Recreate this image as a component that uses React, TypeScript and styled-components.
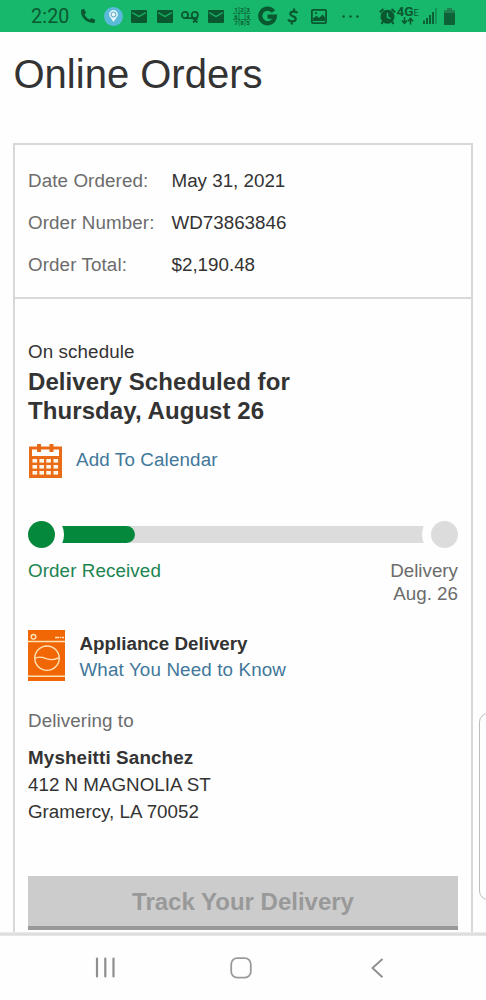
import React from 'react';
import styled, { createGlobalStyle } from 'styled-components';

const INK = '#0a5830';

const GlobalStyle = createGlobalStyle`
  * { box-sizing: border-box; }
  body { margin: 0; background: #fefefe; }
`;

const Screen = styled.div`
  position: relative;
  display: flex;
  flex-direction: column;
  width: 486px;
  height: 1000px;
  overflow: hidden;
  background: #fefefe;
  color: #333;
  font-family: 'Liberation Sans', Arial, sans-serif;
  font-size: 18.8px;
`;

const StatusBar = styled.header`
  display: flex;
  align-items: center;
  flex: none;
  height: 32px;
  padding-left: 31px;
  background: #17b86b;
  color: ${INK};
`;

const Clock = styled.span`
  width: 44px;
  padding-top: 2px;
  font: 400 19.6px/32px Roboto, sans-serif;
  letter-spacing: 0.2px;
`;

const Slot = styled.span<{ $w?: number }>`
  display: flex;
  justify-content: center;
  flex: none;
  width: ${(p) => p.$w ?? 25.65}px;
  svg { display: block; overflow: visible; }
`;

const Page = styled.main`
  display: flex;
  flex-direction: column;
  flex: none;
  height: 900px;
  padding: 18px 14px 0;
  overflow: hidden;
`;

const Title = styled.h1`
  margin: 0 0 45px -0.5px;
  font-size: 40px;
  font-weight: 400;
  line-height: 48px;
`;

const Card = styled.section`
  flex: 1;
  width: 460px;
  margin-left: -1px;
  border: 2px solid #d8d8d8;
  border-bottom: 0;
`;

const Summary = styled.dl`
  display: grid;
  grid-template-columns: 143.5px 1fr;
  margin: 0;
  padding: 15px 13px 11px;
  border-bottom: 2px solid #d8d8d8;
  line-height: 42px;
`;

const Label = styled.dt`
  color: #6c6c6c;
  letter-spacing: 0.1px;
`;

const Value = styled.dd`
  margin: 0;
`;

const Details = styled.div`
  padding: 41px 13px 0;
`;

const Status = styled.p`
  margin: 0;
  line-height: 23px;
  letter-spacing: 0.1px;
`;

const Heading = styled.h2`
  margin: 4px 0 0;
  font-size: 24px;
  line-height: 29px;
  letter-spacing: 0.08px;
`;

const CalendarRow = styled.div`
  display: flex;
  align-items: center;
  gap: 14px;
  height: 36px;
  margin: 18px 0 0 1px;
`;

const Link = styled.a`
  color: #41779a;
  letter-spacing: 0.14px;
`;

const CalendarLink = styled(Link)`
  padding-bottom: 3px;
`;

const Progress = styled.div`
  display: flex;
  align-items: center;
  height: 27px;
  margin-top: 42px;
`;

const Stop = styled.span<{ $done?: boolean }>`
  position: relative;
  z-index: 1;
  flex: none;
  width: 27px;
  height: 27px;
  border-radius: 50%;
  background: ${(p) => (p.$done ? '#04883c' : '#dcdcdc')};
  box-shadow: 0 0 0 9px #fefefe;
`;

const Track = styled.div`
  flex: 1;
  height: 17px;
  background: #dcdcdc;
`;

const Fill = styled.div`
  width: 80px;
  height: 17px;
  border-radius: 0 8.5px 8.5px 0;
  background: #04883c;
`;

const StopLabels = styled.div`
  display: flex;
  justify-content: space-between;
  margin-top: 11px;
  line-height: 23px;
`;

const StopLabel = styled.div<{ $done?: boolean }>`
  color: ${(p) => (p.$done ? '#1b8550' : '#6c6c6c')};
  text-align: ${(p) => (p.$done ? 'left' : 'right')};
  letter-spacing: ${(p) => (p.$done ? 0.1 : 0)}px;
`;

const Appliance = styled.div`
  display: flex;
  gap: 14.5px;
  height: 51px;
  margin-top: 25px;
  line-height: 26px;
`;

const ApplianceText = styled.div`
  display: flex;
  flex-direction: column;
  padding-top: 1px;
`;

const Delivering = styled.p`
  margin: 28px 0 0;
  color: #6c6c6c;
  line-height: 23px;
  letter-spacing: 0.1px;
`;

const Address = styled.address`
  margin-top: 12px;
  font-style: normal;
  line-height: 27px;
`;

const Name = styled.strong`
  letter-spacing: 0.15px;
`;

const Line = styled.div``;

const TrackButton = styled.button`
  display: block;
  width: 100%;
  height: 54px;
  margin-top: 51px;
  padding: 2px 0 0;
  border: 0;
  border-bottom: 4px solid #999;
  background: #ccc;
  color: #999;
  font: 700 24px/48px 'Liberation Sans', Arial, sans-serif;
`;

const EdgeHandle = styled.div`
  position: absolute;
  top: 713px;
  left: 479px;
  width: 20px;
  height: 187px;
  border: 1px solid #bdbdbd;
  border-radius: 9px;
  background: #fefefe;
`;

const Shade = styled.div`
  flex: none;
  height: 4px;
  background: linear-gradient(#ececec, #dadada 60%, #ececec);
`;

const NavBar = styled.nav`
  display: flex;
  align-items: center;
  flex: 1;
  padding-bottom: 1px;
  background: #fefefe;
  svg { display: block; flex: none; }
`;

const NavItem = styled.span<{ $ml: number }>`
  margin-left: ${(p) => p.$ml}px;
`;

const Phone = () => (
  <svg width="16" height="16" viewBox="0 0 16 16">
    <path d="M1.2 1.8 4 .8 6.1 4.7 4.5 6.4C5.7 8.8 7.3 10.3 9.6 11.5L11.3 9.9 15.3 11.8 14.6 14.8C7.2 16.2-.4 8.8 1.2 1.8Z" fill={INK} />
  </svg>
);

const Pin = () => (
  <svg width="19" height="19" viewBox="0 0 19 19">
    <circle cx="9.5" cy="9.5" r="9.5" fill="#5bb9d9" />
    <path d="M9.5 15 5.9 9.8A4.3 4.3 0 1 1 13.1 9.8Z" fill="#e8f7fb" />
    <circle cx="9.5" cy="7.5" r="2.5" fill="none" stroke="#4c9fc0" strokeWidth="1" />
  </svg>
);

const Mail = () => (
  <svg width="16" height="13" viewBox="0 0 16 13">
    <rect width="16" height="13" rx="1" fill={INK} />
    <path d="M1 2.5 8 6.5 15 2.5" fill="none" stroke="#17b86b" strokeWidth="1.3" />
  </svg>
);

const Voicemail = () => (
  <svg width="18" height="13" viewBox="0 0 18 13" fill="none" stroke={INK} strokeWidth="1.8">
    <circle cx="4" cy="5" r="3.1" />
    <circle cx="13.8" cy="5" r="3.1" />
    <path d="M4 8.1H13.8M12 8.5 16.5 12.5M16.5 8.5 12 12.5" />
  </svg>
);

const Keypad = () => (
  <svg width="18" height="19" viewBox="0 0 18 19" fill={INK}>
    <path d="M6 0V19M12 0V19M0 6.3H18M0 12.6H18" stroke={INK} strokeWidth=".8" strokeDasharray="2 .6" />
    <g fontFamily="Roboto, sans-serif" fontSize="6" fontWeight="700" textAnchor="middle">
      <text x="3" y="5">1</text><text x="9" y="5">2</text><text x="15" y="5">3</text>
      <text x="3" y="11.5">6</text><text x="15" y="11.5">4</text>
      <text x="3" y="18">7</text><text x="9" y="18">8</text><text x="15" y="18">5</text>
    </g>
  </svg>
);

const LogoG = () => (
  <svg width="19" height="19" viewBox="0 0 19 19" fill="none" stroke={INK} strokeWidth="4.2">
    <path d="M15.4 4.6A7.3 7.3 0 1 0 16.8 9.7H9.6" />
  </svg>
);

const Dollar = () => (
  <svg width="12" height="17" viewBox="0 0 12 17" fill="none" stroke={INK} strokeWidth="2.2">
    <path d="M10.2 5.1C9.5 3.3 3.7 2.7 3.3 5.6 3 8.6 9.3 7.8 8.7 11.2 8.2 14 2.2 14.1 1.3 11.4M7.3 .5 6.8 3M5 14 4.5 16.5" />
  </svg>
);

const Picture = () => (
  <svg width="16" height="15" viewBox="0 0 16 15">
    <rect x=".9" y=".9" width="14.2" height="13.2" rx="1" fill="none" stroke={INK} strokeWidth="1.8" />
    <path d="M2 12V9.5L5.4 6.7 8 9 11.5 5.6 14 8.5V12Z" fill={INK} />
    <circle cx="5" cy="4.1" r="1.1" fill={INK} />
  </svg>
);

const More = () => (
  <svg width="17" height="3" viewBox="0 0 17 3" fill={INK}>
    <circle cx="1.6" cy="1.5" r="1.2" /><circle cx="8.5" cy="1.5" r="1.2" /><circle cx="15.4" cy="1.5" r="1.2" />
  </svg>
);

const Alarm = () => (
  <svg width="17" height="17" viewBox="0 0 17 17">
    <circle cx="8.5" cy="8.8" r="7" fill={INK} />
    <path d="M.8 4.3 4.5 1M16.2 4.3 12.5 1M4 13.5 2.5 16M13 13.5 14.5 16" fill="none" stroke={INK} strokeWidth="2" />
    <path d="M8.5 4.8V9.3L11.6 10.6" fill="none" stroke="#17b86b" strokeWidth="1.5" />
  </svg>
);

const Network = () => (
  <svg width="21" height="18" viewBox="0 0 21 18" fill={INK}>
    <text x="-.5" y="9.3" fontFamily="Roboto, sans-serif" fontSize="12.5" fontWeight="700" textLength="17" lengthAdjust="spacingAndGlyphs">4G</text>
    <text x="16.4" y="9.2" fontFamily="Roboto, sans-serif" fontSize="9">E</text>
    <path d="M7.5 10V16M5 13.5 7.5 16.3 10 13.5M13.5 17.5V12M11 14.2 13.5 11.4 16 14.2" fill="none" stroke={INK} strokeWidth="1.6" />
  </svg>
);

const Signal = () => (
  <svg width="14" height="16" viewBox="0 0 14 16" fill={INK}>
    <path d="M0 12.5H2V16H0ZM3 10H5V16H3ZM6 7H8V16H6ZM9 4H11V16H9Z" opacity=".9" />
    <path d="M12 0H13.8V16H12Z" opacity=".4" />
  </svg>
);

const Battery = () => (
  <svg width="11" height="17" viewBox="0 0 11 17">
    <path d="M3 0H8V2H10Q11 2 11 3V16Q11 17 10 17H1Q0 17 0 16V3Q0 2 1 2H3Z" fill="#1f8150" />
    <path d="M0 5H11V16Q11 17 10 17H1Q0 17 0 16Z" fill={INK} opacity=".75" />
  </svg>
);

const CalendarIcon = () => (
  <svg width="33" height="34" viewBox="0 0 33 34">
    <path d="M0 2.5H8V0H12V2.5H20.5V0H24.5V2.5H33V34H0Z" fill="#e96b16" />
    <path d="M3 5.5H8V8H12V5.5H20.5V8H24.5V5.5H30V12H3Z" fill="#fefefe" />
    <g fill="#fff5e9">
      {[15, 21, 27].map((y) =>
        [3.5, 10.4, 17.3, 24.5].map((x) => <rect key={`${x}-${y}`} x={x} y={y} width="4.6" height="3.6" />),
      )}
    </g>
  </svg>
);

const WasherIcon = () => (
  <svg width="37" height="51" viewBox="0 0 37 51" fill="none" stroke="#ffe3b8">
    <rect width="37" height="51" fill="#f26705" stroke="none" />
    <path d="M0 11.5H37M0 46.3H37" strokeWidth="1.4" />
    <circle cx="5.5" cy="6.8" r="2.3" strokeWidth="1.4" />
    <path d="M27 7.5H36" strokeWidth="1.4" strokeDasharray="4 .7 1.5 .7" />
    <circle cx="19" cy="28.2" r="12.2" strokeWidth="1.4" />
    <path d="M7 28.5C11 25.5 15 27.5 19 28.8 23 30 27 30 31 27.7" strokeWidth="1.4" />
  </svg>
);

const orderFacts = [
  ['Date Ordered:', 'May 31, 2021'],
  ['Order Number:', 'WD73863846'],
  ['Order Total:', '$2,190.48'],
];

export default function App() {
  return (
    <>
      <GlobalStyle />
      <Screen>
        <StatusBar>
          <Clock>2:20</Clock>
          <Slot><Phone /></Slot>
          <Slot><Pin /></Slot>
          <Slot><Mail /></Slot>
          <Slot><Mail /></Slot>
          <Slot><Voicemail /></Slot>
          <Slot><Mail /></Slot>
          <Slot><Keypad /></Slot>
          <Slot><LogoG /></Slot>
          <Slot><Dollar /></Slot>
          <Slot><Picture /></Slot>
          <Slot $w={38}><More /></Slot>
          <Slot $w={36}><Alarm /></Slot>
          <Slot $w={5}><Network /></Slot>
          <Slot $w={39}><Signal /></Slot>
          <Slot $w={1}><Battery /></Slot>
        </StatusBar>
        <Page>
          <Title>Online Orders</Title>
          <Card>
            <Summary>
              {orderFacts.map(([label, value]) => (
                <React.Fragment key={label}>
                  <Label>{label}</Label>
                  <Value>{value}</Value>
                </React.Fragment>
              ))}
            </Summary>
            <Details>
              <Status>On schedule</Status>
              <Heading>Delivery Scheduled for<br />Thursday, August 26</Heading>
              <CalendarRow>
                <CalendarIcon />
                <CalendarLink>Add To Calendar</CalendarLink>
              </CalendarRow>
              <Progress>
                <Stop $done />
                <Track><Fill /></Track>
                <Stop />
              </Progress>
              <StopLabels>
                <StopLabel $done>Order Received</StopLabel>
                <StopLabel>Delivery<br />Aug. 26</StopLabel>
              </StopLabels>
              <Appliance>
                <WasherIcon />
                <ApplianceText>
                  <strong>Appliance Delivery</strong>
                  <Link>What You Need to Know</Link>
                </ApplianceText>
              </Appliance>
              <Delivering>Delivering to</Delivering>
              <Address>
                <Name>Mysheitti Sanchez</Name>
                <Line>412 N MAGNOLIA ST</Line>
                <Line>Gramercy, LA 70052</Line>
              </Address>
              <TrackButton>Track Your Delivery</TrackButton>
            </Details>
          </Card>
        </Page>
        <Shade />
        <NavBar>
          <NavItem $ml={95}>
            <svg width="21" height="21" viewBox="0 0 21 21" stroke="#8e8e8e" strokeWidth="2.2" strokeLinecap="round">
              <path d="M2 1.5V19.5M10.3 1.5V19.5M18.5 1.5V19.5" />
            </svg>
          </NavItem>
          <NavItem $ml={114}>
            <svg width="22" height="22" viewBox="0 0 22 22" fill="none" stroke="#9a9a9a" strokeWidth="1.8">
              <rect x="1.2" y="1.2" width="19.6" height="19.4" rx="6" />
            </svg>
          </NavItem>
          <NavItem $ml={118}>
            <svg width="14" height="20" viewBox="0 0 14 20" fill="none" stroke="#8e8e8e" strokeWidth="1.9">
              <path d="M12.5 1 2.5 10 12.5 19.3" />
            </svg>
          </NavItem>
        </NavBar>
        <EdgeHandle />
      </Screen>
    </>
  );
}
